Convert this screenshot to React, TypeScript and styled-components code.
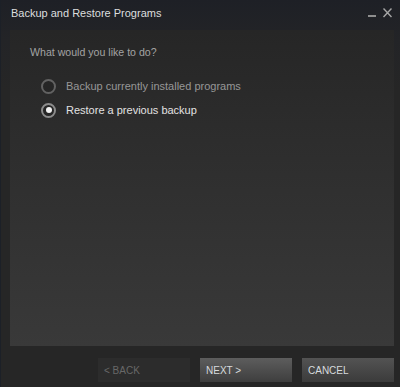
import React, { useState } from 'react';
import styled, { createGlobalStyle } from 'styled-components';

const GlobalStyle = createGlobalStyle`
  html, body {
    margin: 0;
    padding: 0;
    background: #262626;
  }
  * {
    box-sizing: border-box;
  }
`;

const Window = styled.div`
  width: 400px;
  height: 387px;
  display: flex;
  flex-direction: column;
  background: linear-gradient(180deg, #1e2026 0px, #232427 40px, #262626 90px, #262626 100%);
  border-left: 1px solid #1c2027;
  font-family: Arial, "Liberation Sans", sans-serif;
  font-size: 11px;
  overflow: hidden;
`;

const TitleBar = styled.div`
  height: 30px;
  display: flex;
  align-items: flex-start;
  justify-content: space-between;
  padding: 6px 8px 0 10px;
`;

const Title = styled.div`
  color: #dcdedf;
  font-size: 11px;
  line-height: 14px;
`;

const Controls = styled.div`
  display: flex;
  align-items: flex-start;
  gap: 7px;
  padding-top: 2px;
`;

const ControlButton = styled.button`
  border: 0;
  padding: 0;
  background: transparent;
  display: flex;
  cursor: pointer;
`;

const Panel = styled.div`
  flex: 1;
  margin: 0 6px 0 9px;
  padding: 15px 20px 0 20px;
  background: linear-gradient(180deg, #262626 0%, #2d2d2d 35%, #393939 100%);
`;

const Question = styled.div`
  color: #a3a3a3;
  font-size: 10.6px;
  line-height: 14px;
`;

const OptionList = styled.div`
  margin-top: 15px;
  padding-left: 11px;
  display: flex;
  flex-direction: column;
`;

const OptionRow = styled.label`
  height: 24px;
  display: flex;
  align-items: center;
  gap: 10px;
  cursor: pointer;
`;

const Radio = styled.span<{ checked: boolean }>`
  width: 15px;
  height: 15px;
  border-radius: 50%;
  border: 2px solid ${p => (p.checked ? '#8c8c8c' : '#626262')};
  background: #262626;
  display: flex;
  align-items: center;
  justify-content: center;

  &::after {
    content: '';
    width: 6px;
    height: 6px;
    border-radius: 50%;
    background: #f2f2f2;
    display: ${p => (p.checked ? 'block' : 'none')};
  }
`;

const OptionText = styled.span<{ checked: boolean }>`
  color: ${p => (p.checked ? '#e2e2e2' : '#979797')};
  font-size: 11px;
`;

const Footer = styled.div`
  height: 41px;
  display: flex;
  justify-content: flex-end;
  gap: 10px;
  padding: 12px 6px 5px 0;
`;

const Button = styled.button<{ variant: 'disabled' | 'primary' | 'normal' }>`
  width: 92px;
  height: 24px;
  border: 0;
  padding: 0 0 0 6px;
  text-align: left;
  font-family: Arial, "Liberation Sans", sans-serif;
  font-size: 10px;
  cursor: ${p => (p.variant === 'disabled' ? 'default' : 'pointer')};
  color: ${p => (p.variant === 'disabled' ? '#686868' : '#d7dbde')};
  background: ${p =>
    p.variant === 'disabled'
      ? '#2c2c2c'
      : p.variant === 'primary'
      ? 'linear-gradient(180deg, #5d5d5d 0%, #3e3e3e 100%)'
      : 'linear-gradient(180deg, #535353 0%, #3b3b3b 100%)'};
`;

const options = ['Backup currently installed programs', 'Restore a previous backup'];

export default function App() {
  const [selected, setSelected] = useState(1);

  return (
    <>
      <GlobalStyle />
      <Window>
        <TitleBar>
          <Title>Backup and Restore Programs</Title>
          <Controls>
            <ControlButton aria-label="Minimize">
              <svg width="8" height="10" viewBox="0 0 8 10">
                <rect x="0" y="7" width="8" height="2" fill="#8e8e8e" />
              </svg>
            </ControlButton>
            <ControlButton aria-label="Close">
              <svg width="9" height="10" viewBox="0 0 9 10">
                <path d="M0.5 0.5 L8.5 9 M8.5 0.5 L0.5 9" stroke="#a6a6a6" strokeWidth="1.4" />
              </svg>
            </ControlButton>
          </Controls>
        </TitleBar>
        <Panel>
          <Question>What would you like to do?</Question>
          <OptionList>
            {options.map((label, i) => (
              <OptionRow key={label} onClick={() => setSelected(i)}>
                <Radio checked={selected === i} />
                <OptionText checked={selected === i}>{label}</OptionText>
              </OptionRow>
            ))}
          </OptionList>
        </Panel>
        <Footer>
          <Button variant="disabled">&lt; BACK</Button>
          <Button variant="primary">NEXT &gt;</Button>
          <Button variant="normal">CANCEL</Button>
        </Footer>
      </Window>
    </>
  );
}
